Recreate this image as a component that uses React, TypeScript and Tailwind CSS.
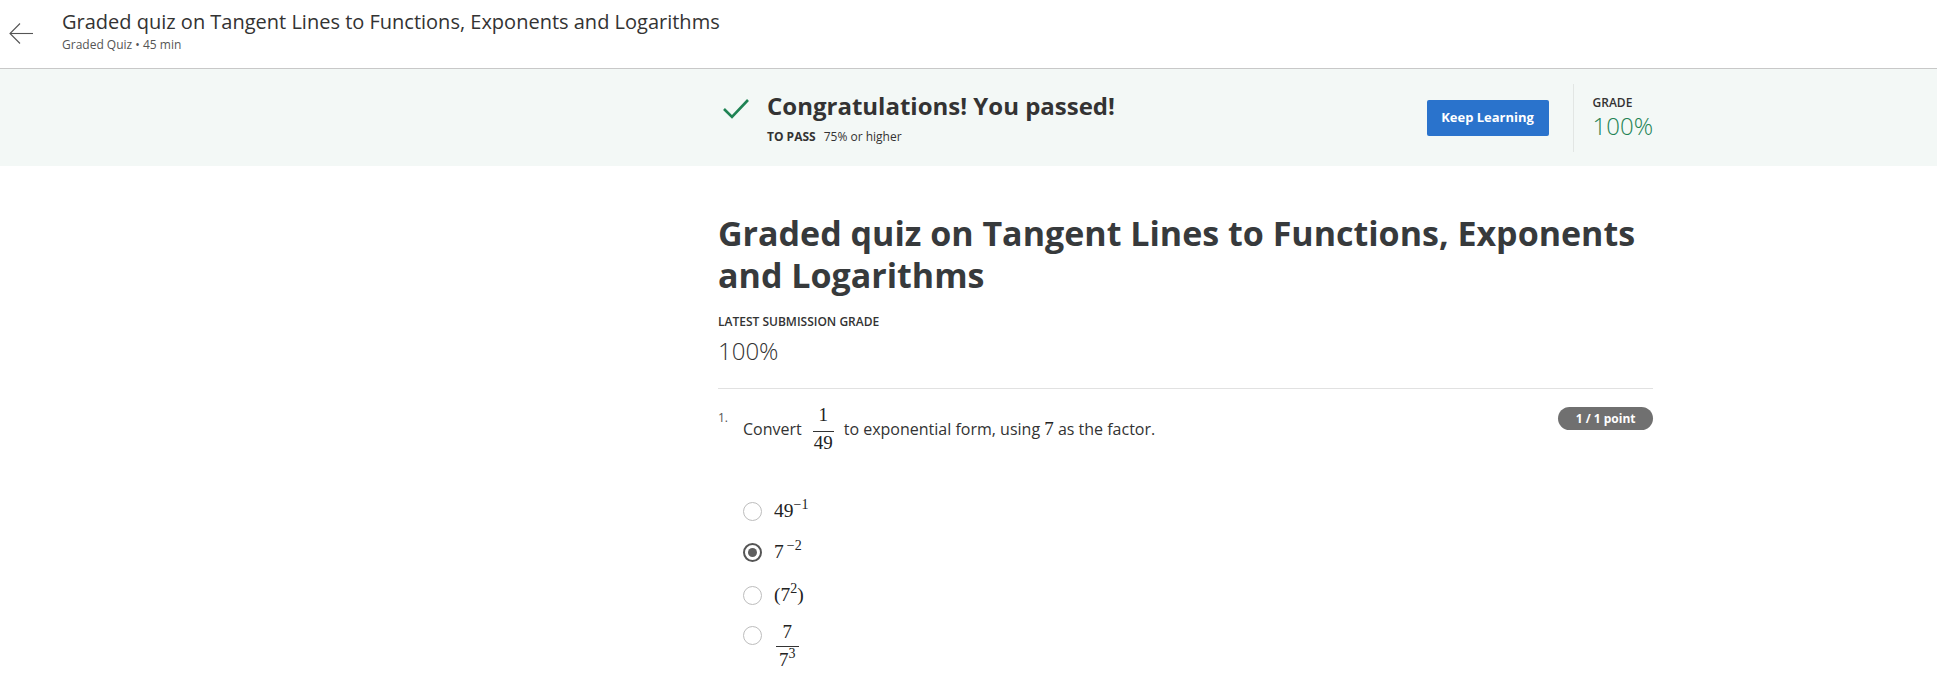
import React from "react";

const mathFont = "font-['Liberation_Serif','DejaVu_Serif',serif]";

type FracProps = {
  num: React.ReactNode;
  den: React.ReactNode;
  numClass: string;
  denClass: string;
};

const Frac = ({ num, den, numClass, denClass }: FracProps) => (
  <span className={`${mathFont} inline-flex flex-col items-center text-[19px] text-[#222]`}>
    <span className={numClass}>{num}</span>
    <span className="h-px w-full bg-[#333]" />
    <span className={denClass}>{den}</span>
  </span>
);

const Sup = ({ children }: { children: React.ReactNode }) => (
  <span className="align-[8px] text-[14px] leading-[0]">{children}</span>
);

const Radio = ({ checked }: { checked?: boolean }) =>
  checked ? (
    <span className="flex h-[19px] w-[19px] shrink-0 items-center justify-center rounded-full border-2 border-[#555]">
      <span className="h-[9px] w-[9px] rounded-full bg-[#5e5e5e]" />
    </span>
  ) : (
    <span className="block h-[19px] w-[19px] shrink-0 rounded-full border-[1.5px] border-[#bdbdbd] bg-white" />
  );

export default function App() {
  return (
    <div className="min-h-screen bg-white font-['Open_Sans',sans-serif] text-[#333]">
      {/* HEADER */}
      <header className="flex h-[69px] items-start border-b border-[#c8c8c8] pt-[10px]">
        <button className="ml-[9px] mt-[13px]">
          <svg width="24" height="21" viewBox="0 0 24 21" fill="none" stroke="#555" strokeWidth="1.1">
            <path d="M24 10.5H1" />
            <path d="M11 0.5L1 10.5L11 20.5" />
          </svg>
        </button>
        <div className="ml-[29px]">
          <h2 className="text-[20px] leading-[24px] font-normal text-[#333]">
            Graded quiz on Tangent Lines to Functions, Exponents and Logarithms
          </h2>
          <p className="mt-[3px] text-[12px] leading-[16px] text-[#555]">Graded Quiz • 45 min</p>
        </div>
      </header>

      {/* RESULT BANNER */}
      <section className="flex h-[97px] items-center bg-[#f3f8f6]">
        <div className="ml-[718px] flex w-[935px] items-center justify-between">
          <div className="flex items-start">
            <svg className="ml-[4px] mt-[8px]" width="28" height="21" viewBox="0 0 28 21" fill="none">
              <path d="M2 11L10 19L26 2" stroke="#1f8354" strokeWidth="2.6" />
            </svg>
            <div className="ml-[17px]">
              <h3 className="text-[24px] leading-[32px] font-bold text-[#333]">
                Congratulations! You passed!
              </h3>
              <p className="mt-[7px] text-[12px] leading-[16px]">
                <span className="font-bold">TO PASS</span>
                <span className="ml-[8px]">75% or higher</span>
              </p>
            </div>
          </div>

          <div className="flex items-center">
            <button className="h-[36px] w-[122px] rounded-[2px] bg-[#2a73cc] text-[13px] font-bold text-white">
              Keep Learning
            </button>
            <div className="ml-[24px] h-[68px] w-px bg-[#e2e6e4]" />
            <div className="ml-[19px]">
              <p className="text-[12px] leading-[16px] font-semibold">GRADE</p>
              <p className="text-[24px] leading-[30px] font-light text-[#1f8354]">100%</p>
            </div>
          </div>
        </div>
      </section>

      {/* QUIZ */}
      <main className="ml-[718px] w-[935px] pt-[46px]">
        <h1 className="text-[34px] leading-[42px] font-bold text-[#373a3c]">
          Graded quiz on Tangent Lines to Functions, Exponents and Logarithms
        </h1>
        <p className="mt-[18px] text-[12px] leading-[16px] font-semibold uppercase">Latest Submission Grade</p>
        <p className="mt-[5px] text-[24px] leading-[32px] font-light">100%</p>
        <div className="mt-[21px] h-px bg-[#e1e1e1]" />

        {/* QUESTION 1 */}
        <div className="flex items-start justify-between pt-[16px]">
          <div className="flex items-start">
            <span className="w-[25px] pt-[5px] text-[12px] leading-[16px] text-[#555]">1.</span>
            <div className="flex items-center text-[16px] leading-[24px]">
              <span>Convert</span>
              <span className="ml-[11px] mr-[10px] flex">
                <Frac num="1" den="49" numClass="px-[1px] pb-[6.5px] leading-none" denClass="px-[1px] pt-[1.5px] leading-none" />
              </span>
              <span>
                to exponential form, using <span className={`${mathFont} text-[19px] text-[#222]`}>7</span> as the factor.
              </span>
            </div>
          </div>
          <span className="mt-[2px] flex h-[23px] items-center rounded-full bg-[#707070] px-[17.5px] text-[12px] font-bold text-white">
            1 / 1 point
          </span>
        </div>

        <div className="ml-[25px] mt-[43px] flex flex-col text-[19.5px] text-[#222]">
          <div className="flex h-[32px] items-center">
            <Radio />
            <span className={`${mathFont} ml-[12px] leading-none`}>
              49<Sup>−1</Sup>
            </span>
          </div>
          <div className="mt-[9px] flex h-[32px] items-center">
            <Radio checked />
            <span className={`${mathFont} ml-[12px] leading-none`}>
              7<Sup>
                <span className="ml-[3px]">−</span>2
              </Sup>
            </span>
          </div>
          <div className="mt-[11px] flex h-[32px] items-center">
            <Radio />
            <span className={`${mathFont} ml-[12px] leading-none`}>
              (7<Sup>2</Sup>)
            </span>
          </div>
          <div className="mt-[8px] flex items-start">
            <span className="mt-[7px] flex">
              <Radio />
            </span>
            <span className="ml-[14px] mt-[3px] flex">
              <Frac
                num="7"
                den={
                  <>
                    7<Sup>3</Sup>
                  </>
                }
                numClass="px-[2px] pb-[4.5px] leading-none"
                denClass="px-[3px] pt-[3.5px] leading-none"
              />
            </span>
          </div>
        </div>
      </main>
    </div>
  );
}
